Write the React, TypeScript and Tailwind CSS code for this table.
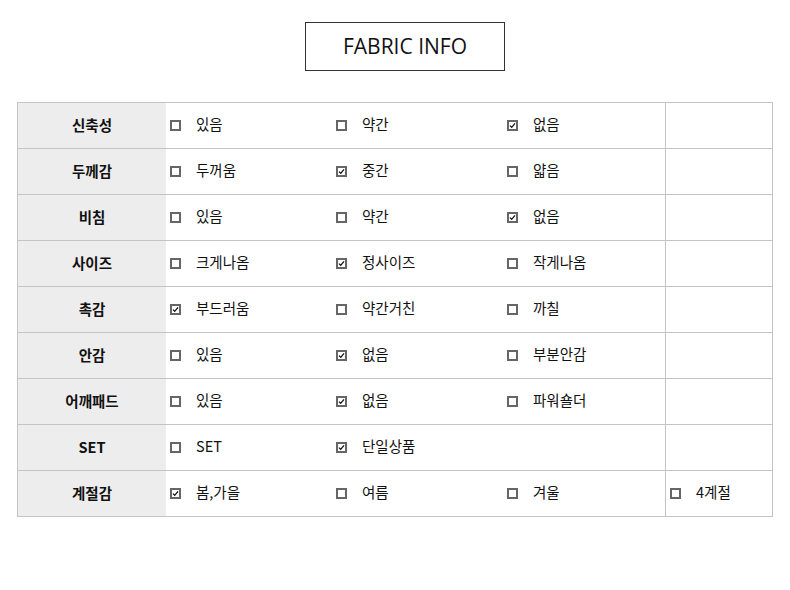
type Option = {
    label: string;
    checked: boolean;
};

type Row = {
    title: string;
    options: (Option | null)[];
};

const rows: Row[] = [
    { title: '신축성', options: [{ label: '있음', checked: false }, { label: '약간', checked: false }, { label: '없음', checked: true }, null] },
    { title: '두께감', options: [{ label: '두꺼움', checked: false }, { label: '중간', checked: true }, { label: '얇음', checked: false }, null] },
    { title: '비침', options: [{ label: '있음', checked: false }, { label: '약간', checked: false }, { label: '없음', checked: true }, null] },
    { title: '사이즈', options: [{ label: '크게나옴', checked: false }, { label: '정사이즈', checked: true }, { label: '작게나옴', checked: false }, null] },
    { title: '촉감', options: [{ label: '부드러움', checked: true }, { label: '약간거친', checked: false }, { label: '까칠', checked: false }, null] },
    { title: '안감', options: [{ label: '있음', checked: false }, { label: '없음', checked: true }, { label: '부분안감', checked: false }, null] },
    { title: '어깨패드', options: [{ label: '있음', checked: false }, { label: '없음', checked: true }, { label: '파워숄더', checked: false }, null] },
    { title: 'SET', options: [{ label: 'SET', checked: false }, { label: '단일상품', checked: true }, null, null] },
    { title: '계절감', options: [{ label: '봄,가을', checked: true }, { label: '여름', checked: false }, { label: '겨울', checked: false }, { label: '4계절', checked: false }] }
];

const CheckBox = ({ checked }: { checked: boolean }) => (
    <span className="flex h-[11px] w-[11px] shrink-0 items-center justify-center border-2 border-[#666666] bg-white">
        {checked && (
            <svg width="7" height="7" viewBox="0 0 7 7" fill="none">
                <path d="M1 3.6 L2.7 5.3 L6 1.4" stroke="#111" strokeWidth="1.3" />
            </svg>
        )}
    </span>
);

const OptionCell = ({ option, className }: { option: Option | null; className: string }) => (
    <div className={`flex items-center ${className}`}>
        {option && (
            <>
                <CheckBox checked={option.checked} />
                <span className="-mt-[2px] ml-[15px] text-[14.5px] leading-none text-[#111]">{option.label}</span>
            </>
        )}
    </div>
);

export default function App() {
    return (
        <div className="min-h-[590px] w-[790px] bg-white pt-[22px] font-['Noto_Sans_CJK_KR',sans-serif]">
            <div className="flex pl-[305px]">
                <div className="flex h-[49px] w-[200px] items-center justify-center border border-[#333333] font-['Open_Sans','Noto_Sans_CJK_KR',sans-serif] text-[21px] text-[#111]">
                    FABRIC INFO
                </div>
            </div>

            <div className="ml-[17px] mt-[31px] w-[756px] border border-[#c4c4c4]">
                {rows.map((row, i) => (
                    <div
                        key={row.title}
                        className={`grid grid-cols-[148px_170px_170px_159px_107px] ${i > 0 ? 'h-[46px] border-t border-[#c4c4c4]' : 'h-[45px]'}`}
                    >
                        <div className="flex items-center justify-center bg-[#ededed] pb-[2px] text-[14.5px] font-bold text-[#111]">
                            {row.title}
                        </div>
                        <OptionCell option={row.options[0]} className="pl-[4px]" />
                        <OptionCell option={row.options[1]} className="pl-0" />
                        <OptionCell option={row.options[2]} className="pl-[1px]" />
                        <OptionCell option={row.options[3]} className="border-l border-[#c4c4c4] pl-[4px]" />
                    </div>
                ))}
            </div>
        </div>
    );
}
